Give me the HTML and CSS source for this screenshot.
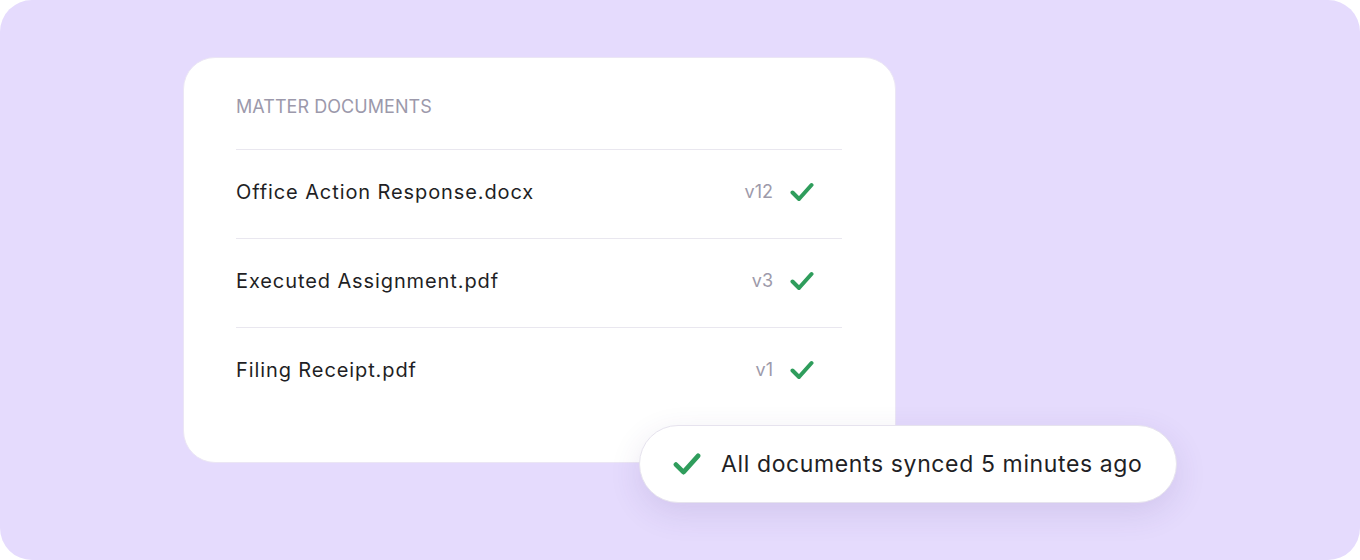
FILE: index.html
```html
<!DOCTYPE html>
<html lang="en">
<head>
<meta charset="utf-8">
<title>Matter documents</title>
<link rel="stylesheet" href="styles.css">
</head>
<body>
  <main class="stage">
    <section class="card">
      <h2 class="card-title">MATTER DOCUMENTS</h2>
      <ul class="doc-list">
        <li class="doc-row">
          <span class="doc-name">Office Action Response.docx</span>
          <span class="doc-meta">
            <span class="doc-version">v12</span>
            <svg class="check" viewBox="0 0 24 20" aria-hidden="true"><path d="M2.5 10.5 L9 17 L21.5 3"/></svg>
          </span>
        </li>
        <li class="doc-row">
          <span class="doc-name">Executed Assignment.pdf</span>
          <span class="doc-meta">
            <span class="doc-version">v3</span>
            <svg class="check" viewBox="0 0 24 20" aria-hidden="true"><path d="M2.5 10.5 L9 17 L21.5 3"/></svg>
          </span>
        </li>
        <li class="doc-row">
          <span class="doc-name">Filing Receipt.pdf</span>
          <span class="doc-meta">
            <span class="doc-version">v1</span>
            <svg class="check" viewBox="0 0 24 20" aria-hidden="true"><path d="M2.5 10.5 L9 17 L21.5 3"/></svg>
          </span>
        </li>
      </ul>
    </section>

    <div class="toast">
      <svg class="check check-lg" viewBox="0 0 24 20" aria-hidden="true"><path d="M2.5 10.5 L9 17 L21.5 3"/></svg>
      <span class="toast-text">All documents synced 5 minutes ago</span>
    </div>
  </main>
</body>
</html>
```

FILE: styles.css
```css
* {
  box-sizing: border-box;
}

html, body {
  margin: 0;
  padding: 0;
  background: #ffffff;
}

body {
  font-family: Inter, "Noto Sans", "Liberation Sans", sans-serif;
  color: #1e1e24;
}

/* lavender backdrop */
.stage {
  position: relative;
  width: 1360px;
  height: 560px;
  background: #e5dbfd;
  border-radius: 32px;
  padding: 57px 0 0 183px;
}

/* document card */
.card {
  width: 713px;
  height: 406px;
  background: #ffffff;
  border: 1px solid #ebe6f5;
  border-radius: 32px;
  padding: 37px 53px 0 52px;
}

.card-title {
  margin: 0 0 30px;
  font-size: 18px;
  line-height: 24px;
  font-weight: 400;
  color: #9c99ab;
  letter-spacing: 0.05px;
}

.doc-list {
  list-style: none;
  margin: 0;
  padding: 0;
}

.doc-row {
  display: flex;
  align-items: center;
  justify-content: space-between;
  height: 89px;
  border-top: 1.5px solid #e9e7ef;
  padding: 0 28px 4px 0;
}

.doc-name {
  font-size: 20px;
  line-height: 28px;
  letter-spacing: 0.9px;
  color: #1f1f25;
}

.doc-meta {
  display: flex;
  align-items: center;
  gap: 17px;
}

.doc-version {
  font-size: 18px;
  line-height: 24px;
  color: #9d9aaa;
}

.check {
  width: 24px;
  height: 20px;
  display: block;
}

.check path {
  fill: none;
  stroke: #2f9d5c;
  stroke-width: 4;
  stroke-linecap: round;
  stroke-linejoin: round;
}

/* sync status pill, floating over the card corner */
.toast {
  position: absolute;
  left: 639px;
  top: 425px;
  width: 538px;
  height: 78px;
  display: flex;
  align-items: center;
  gap: 20px;
  padding: 0 30px 1px 33px;
  background: #ffffff;
  border: 1.5px solid #e6e3ee;
  border-radius: 39px;
  box-shadow: 0 10px 32px rgba(70, 50, 120, 0.12);
}

.check-lg {
  width: 28px;
  height: 24px;
}

.toast-text {
  font-size: 23px;
  line-height: 30px;
  letter-spacing: 0.62px;
  color: #1f1f25;
  white-space: nowrap;
}
```
